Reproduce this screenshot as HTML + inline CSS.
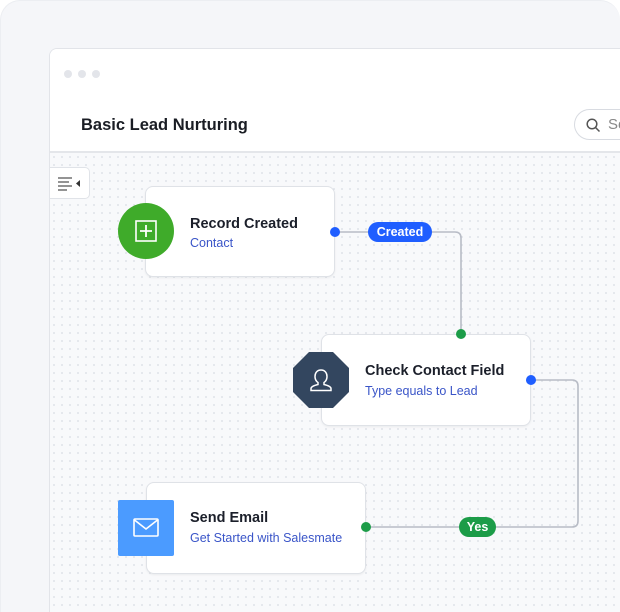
<!DOCTYPE html>
<html style="overflow:hidden;height:612px;width:620px"><head><style>
*{margin:0;padding:0;box-sizing:border-box}
body{width:620px;height:612px;overflow:hidden;background:#fff;font-family:"Liberation Sans",sans-serif;position:relative}
.bg{position:absolute;left:0;top:0;width:620px;height:612px;background:#f5f6f9;border-radius:20px 20px 0 0;border:1px solid #eceef2;border-bottom:none;border-right:none}
.win{position:absolute;left:49px;top:48px;width:571px;height:564px;background:#f8f9fb;border:1px solid #e2e4e9;border-right:none;border-bottom:none;border-radius:8px 0 0 0;overflow:hidden}
.head{position:absolute;left:0;top:0;width:100%;height:104px;background:#fff;border-bottom:2px solid #e4e6ea}
.dots{position:absolute;left:14px;top:16px}
.dots i{display:inline-block;width:8px;height:8px;border-radius:50%;background:#e3e5ea;margin-right:6px}
.title{position:absolute;left:31px;top:67px;font-size:16.5px;font-weight:bold;color:#1a1d24}
.search{position:absolute;left:524px;top:60px;width:47px;height:31px;border:1px solid #d8dbe1;border-right:none;border-radius:16px 0 0 16px;color:#888;font-size:15px;padding:6px 0 0 33px;overflow:hidden;white-space:nowrap}
.canvas{position:absolute;left:0;top:104px;width:100%;height:460px;background-image:radial-gradient(#dfe2e8 0.8px,transparent 1px);background-size:8px 8px}
.tog{position:absolute;left:0;top:118px;width:40px;height:32px;background:#fff;border:1px solid #e0e3e8;border-left:none;border-radius:0 5px 5px 0}
.card{position:absolute;background:#fff;border:1px solid #dfe2e7;border-radius:8px;box-shadow:0 1px 2px rgba(0,0,0,.06)}
.t{position:absolute;font-size:14.5px;font-weight:bold;color:#1b1f2a}
.s{position:absolute;font-size:12.5px;color:#3a55c8}
.pill{position:absolute;color:#fff;font-size:12.5px;font-weight:bold;text-align:center;border-radius:10px}
.dot{position:absolute;width:10px;height:10px;border-radius:50%}
</style></head><body>
<div class="bg"></div>
<div class="win">
 <div class="head">
  <div class="dots"><i></i><i></i><i></i></div>
  <div class="title">Basic Lead Nurturing</div>
  <div class="search">Se<svg style="position:absolute;left:11px;top:8px" width="15" height="15" viewBox="0 0 15 15"><circle cx="6" cy="6" r="4.8" fill="none" stroke="#555" stroke-width="1.5"/><path d="M9.5 9.5L13.5 13.5" stroke="#555" stroke-width="1.5"/></svg></div>
 </div>
 <div class="canvas"></div>
 <div class="tog"><svg style="position:absolute;left:8px;top:9px" width="24" height="14" viewBox="0 0 24 14"><path d="M0 1h14M0 5h11M0 9h14M0 13h9" stroke="#555" stroke-width="1.2"/><path d="M22 3v7l-4-3.5z" fill="#333"/></svg></div>
</div>
<svg style="position:absolute;left:0;top:0" width="620" height="600">
 <path d="M335 232H455Q461 232 461 238V334" fill="none" stroke="#b8bcc6" stroke-width="1.6"/>
 <path d="M531 380H572Q578 380 578 386V521Q578 527 572 527H366" fill="none" stroke="#b8bcc6" stroke-width="1.6"/>
</svg>
<div class="card" style="left:145px;top:186px;width:190px;height:91px"></div>
<div class="card" style="left:321px;top:334px;width:210px;height:92px"></div>
<div class="card" style="left:146px;top:482px;width:220px;height:92px"></div>
<div style="position:absolute;left:118px;top:203px;width:56px;height:56px;border-radius:50%;background:#3fab2a"></div>
<svg style="position:absolute;left:135px;top:220px" width="22" height="22"><rect x="1" y="1" width="20" height="20" fill="none" stroke="#fff" stroke-width="1.6"/><path d="M11 5v12M5 11h12" stroke="#fff" stroke-width="1.8"/></svg>
<svg style="position:absolute;left:293px;top:352px" width="56" height="56" viewBox="0 0 56 56"><polygon points="16,0 40,0 56,16 56,40 40,56 16,56 0,40 0,16" fill="#33465f"/><path d="M28 18c-4 0-6 3-6 6.5 0 3 1.5 5 3 6v2c-4 1-7 2.5-7 4v2h20v-2c0-1.5-3-3-7-4v-2c1.5-1 3-3 3-6 0-3.5-2-6.5-6-6.5z" fill="none" stroke="#fff" stroke-width="1.5"/></svg>
<div style="position:absolute;left:118px;top:500px;width:56px;height:56px;border-radius:2px;background:#4b9bff"></div>
<svg style="position:absolute;left:133px;top:518px" width="26" height="20"><rect x="1" y="1" width="24" height="17" rx="1" fill="none" stroke="#fff" stroke-width="1.6"/><path d="M1.5 2L13 11L24.5 2" fill="none" stroke="#fff" stroke-width="1.6"/></svg>
<div class="t" style="left:190px;top:216px">Record Created</div>
<div class="s" style="left:190px;top:236px">Contact</div>
<div class="t" style="left:365px;top:363px">Check Contact Field</div>
<div class="s" style="left:365px;top:384px">Type equals to Lead</div>
<div class="t" style="left:190px;top:510px">Send Email</div>
<div class="s" style="left:190px;top:531px">Get Started with Salesmate</div>
<div class="pill" style="left:368px;top:222px;width:64px;height:20px;line-height:20px;background:#1f5eff">Created</div>
<div class="pill" style="left:459px;top:517px;width:37px;height:20px;line-height:20px;background:#1c9c48">Yes</div>
<div class="dot" style="left:330px;top:227px;background:#1f5eff"></div>
<div class="dot" style="left:456px;top:329px;background:#1c9c48"></div>
<div class="dot" style="left:526px;top:375px;background:#1f5eff"></div>
<div class="dot" style="left:361px;top:522px;background:#1c9c48"></div>
</body></html>
